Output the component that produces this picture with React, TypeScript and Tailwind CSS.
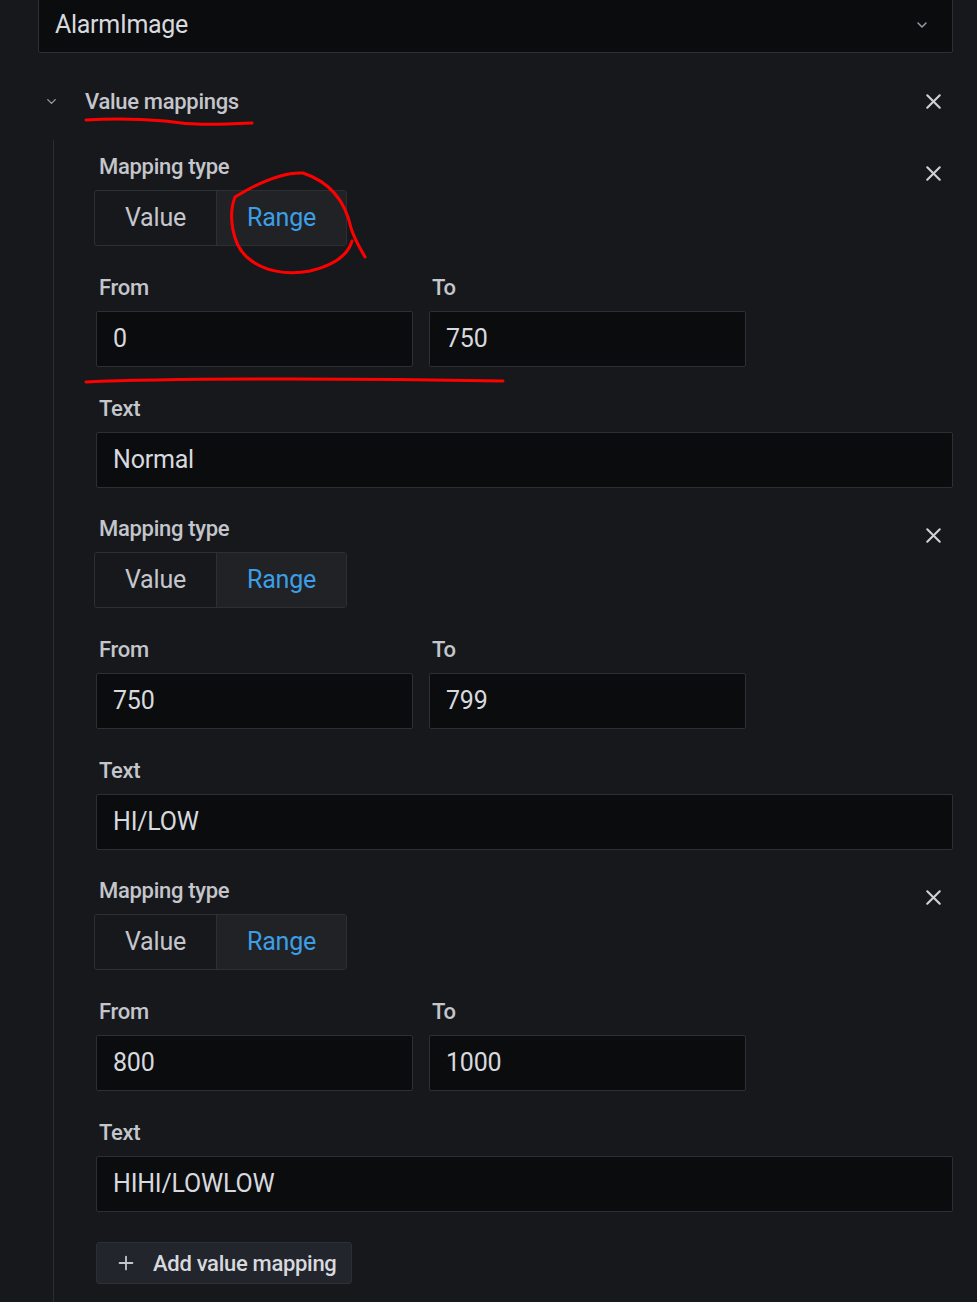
import React from 'react';
import { ChevronDown, Plus, X } from 'lucide-react';

interface Mapping {
  from: string;
  to: string;
  text: string;
}

const mappings: Mapping[] = [
  { from: '0', to: '750', text: 'Normal' },
  { from: '750', to: '799', text: 'HI/LOW' },
  { from: '800', to: '1000', text: 'HIHI/LOWLOW' },
];

const Label: React.FC<{ children: React.ReactNode }> = ({ children }) => (
  <div className="h-[24px] pl-[3px] text-[22px] leading-[24px] font-medium text-[#c4c6cc] tracking-[-0.3px]">
    {children}
  </div>
);

const Field: React.FC<{ value: string }> = ({ value }) => (
  <div className="h-[56px] flex items-center pl-[16px] bg-[#0b0c0e] border border-[#2c2f34] rounded-[2px] text-[25px] text-[#d8d9de] tracking-[-0.2px]">
    {value}
  </div>
);

const MappingBlock: React.FC<{ m: Mapping }> = ({ m }) => (
  <div className="flex flex-col">
    <div className="h-[24px] flex items-start justify-between">
      <Label>Mapping type</Label>
      <div className="w-[40px] h-[24px] flex justify-center overflow-visible">
        <X size={25} strokeWidth={2} className="mt-[6px] text-[#d0d1d6]" />
      </div>
    </div>
    {/* Radio group */}
    <div className="mt-[11px] -ml-[2px] flex h-[56px] w-[253px] border border-[#2c2f34] rounded-[3px] overflow-hidden">
      <div className="w-[122px] flex items-center justify-center text-[25px] text-[#c4c6cc] border-r border-[#2c2f34] tracking-[-0.2px]">
        Value
      </div>
      <div className="flex-1 flex items-center justify-center text-[25px] text-[#3d9ee6] bg-[#202226] tracking-[-0.2px]">
        Range
      </div>
    </div>
    {/* From / To */}
    <div className="mt-[30px] flex gap-[16px]">
      <div className="w-[317px] flex flex-col gap-[11px]">
        <Label>From</Label>
        <Field value={m.from} />
      </div>
      <div className="w-[317px] flex flex-col gap-[11px]">
        <Label>To</Label>
        <Field value={m.to} />
      </div>
    </div>
    {/* Text */}
    <div className="mt-[30px] flex flex-col gap-[11px]">
      <Label>Text</Label>
      <Field value={m.text} />
    </div>
  </div>
);

export default function App() {
  return (
    <div className="relative w-[977px] h-[1302px] overflow-hidden bg-[#17181c] font-['Roboto','Liberation_Sans',sans-serif]">
      {/* Field select */}
      <div className="-mt-[3px] ml-[38px] w-[915px] h-[56px] flex items-center justify-between pl-[16px] pr-[22px] bg-[#0b0c0e] border border-[#2c2f34] rounded-[2px]">
        <span className="text-[25px] text-[#d8d9de] tracking-[-0.3px]">AlarmImage</span>
        <ChevronDown size={16} strokeWidth={2.2} className="text-[#9a9ca3]" />
      </div>

      {/* Section header */}
      <div className="mt-[27px] h-[42px] flex items-center pr-[24px]">
        <div className="w-[104px] flex justify-center -ml-[1px]">
          <ChevronDown size={15} strokeWidth={2.2} className="text-[#9a9ca3]" />
        </div>
        <span className="-ml-[18px] text-[22px] font-medium text-[#c4c6cc] tracking-[-0.3px]">Value mappings</span>
        <div className="ml-auto w-[40px] flex justify-center">
          <X size={25} strokeWidth={2} className="text-[#d0d1d6]" />
        </div>
      </div>

      {/* Section body */}
      <div className="mt-[18px] ml-[53px] border-l border-[#2a2c31] pl-[42px] pr-[24px] pt-[15px] pb-[40px] flex flex-col gap-[29px]">
        {mappings.map((m, i) => (
          <MappingBlock key={i} m={m} />
        ))}
        <div className="mt-[1px] w-[256px] h-[42px] flex items-center gap-[16px] pl-[18px] bg-[#22252b] border border-[#2c2f34] rounded-[3px]">
          <Plus size={22} strokeWidth={2} className="text-[#c4c6cc]" />
          <span className="text-[22px] font-medium text-[#d8d9de] tracking-[-0.3px]">Add value mapping</span>
        </div>
      </div>

      {/* Red annotation strokes drawn over the screenshot */}
      <svg className="absolute inset-0 pointer-events-none" width="977" height="1302" viewBox="0 0 977 1302">
        <g fill="none" stroke="#ff0000" strokeWidth="3" strokeLinecap="round" strokeLinejoin="round">
          <path d="M86 120 C 120 118 140 119 165 121 C 190 125 210 125 252 123" />
          <path d="M365 257 C 358 245 354 238 351 228 C 345 200 330 182 303 173 C 282 172 258 183 235 197 C 228 215 232 245 248 258 C 262 270 285 276 310 271 C 335 265 348 255 352 241" />
          <path d="M86 382 C 150 379 220 379 290 379 C 380 379 450 380 503 381" />
        </g>
      </svg>
    </div>
  );
}
